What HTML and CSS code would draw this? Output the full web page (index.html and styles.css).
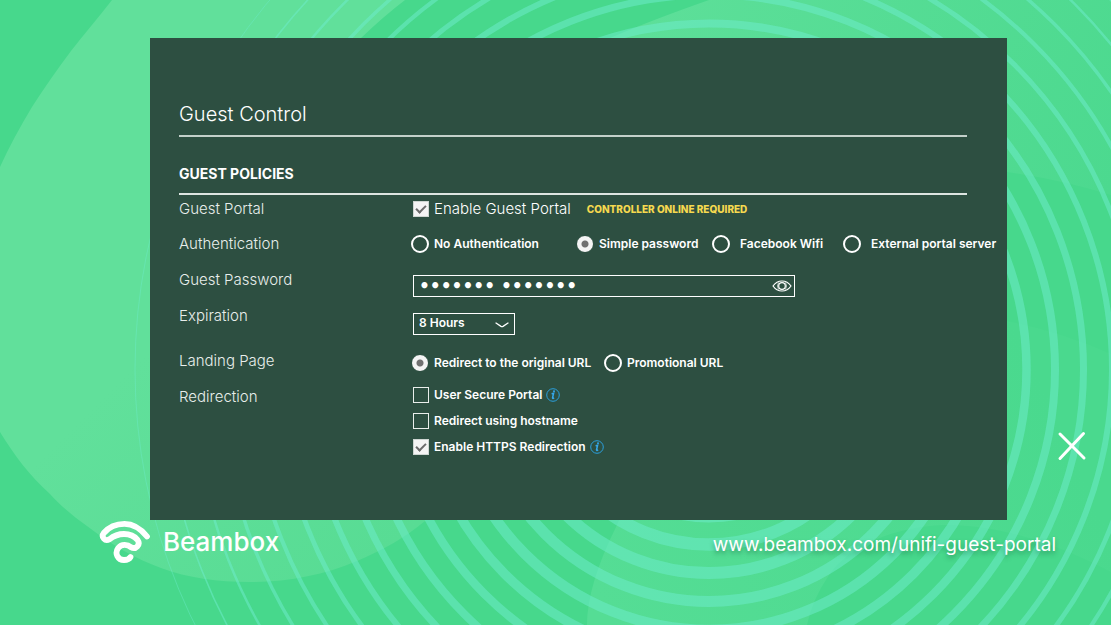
FILE: index.html
```html
<!DOCTYPE html>
<html lang="en">
<head>
<meta charset="utf-8">
<meta name="viewport" content="width=device-width, initial-scale=1">
<title>Guest Control</title>
<link rel="stylesheet" href="styles.css">
</head>
<body>
<div class="page">
  <svg class="backdrop" viewBox="0 0 1111 625" preserveAspectRatio="xMidYMid slice" aria-hidden="true">
    <defs>
      <linearGradient id="leaf" gradientUnits="userSpaceOnUse" x1="60" y1="150" x2="420" y2="520">
        <stop offset="0.4" stop-color="#61e09b"/><stop offset="1" stop-color="#58dc94"/>
      </linearGradient>
      <linearGradient id="crest" gradientUnits="userSpaceOnUse" x1="650" y1="0" x2="1111" y2="190">
        <stop offset="0" stop-color="#5ddf99"/><stop offset="1" stop-color="#4cd98f"/>
      </linearGradient>
      <linearGradient id="bowl" gradientUnits="userSpaceOnUse" x1="600" y1="600" x2="1050" y2="400">
        <stop offset="0" stop-color="#55dd95"/><stop offset="1" stop-color="#4ad98e"/>
      </linearGradient>
    </defs>
    <rect width="1111" height="625" fill="#47d88c"/>
    <path fill="url(#leaf)" d="M112 0C98 18 84 34 71 51C57 70 44 88 32 107C20 127 9 147 0 167V432C14 455 30 476 50 494C61 506 74 517 87 526C110 544 136 559 161 568C188 578 218 582 250 582C288 582 324 575 357 561C383 550 406 537 425 521L540 340L361 38Q384 16 405 0Z"/>
    <path fill="url(#crest)" d="M709 0Q652 20 610 38L700 160L1007 172Q1062 180 1111 195V0Z"/>
    <path fill="url(#bowl)" d="M640 480Q625 505 617 525Q587 585 587 625H807Q812 600 829 575C850 545 895 527 943 525C1000 524 1060 545 1111 572V354Q1062 332 1007 321Z"/>
    <g class="rings">
      <circle cx="709" cy="369.500" r="146.500" stroke-width="13"/>
      <circle cx="709" cy="369.500" r="175" stroke-width="12.500"/>
      <circle cx="709" cy="369.500" r="203.500" stroke-width="12"/>
      <circle cx="709" cy="369.500" r="232" stroke-width="11"/>
      <circle cx="709" cy="369.500" r="260.500" stroke-width="10.500"/>
      <circle cx="709" cy="369.500" r="289" stroke-width="9.500"/>
      <circle cx="709" cy="369.500" r="317.500" stroke-width="8.500"/>
      <circle cx="709" cy="369.500" r="346" stroke-width="8"/>
      <circle cx="709" cy="369.500" r="374.500" stroke-width="7"/>
      <circle cx="709" cy="369.500" r="403" stroke-width="6"/>
      <circle cx="709" cy="369.500" r="431.500" stroke-width="5"/>
      <circle cx="709" cy="369.500" r="460" stroke-width="4.200"/>
      <circle cx="709" cy="369.500" r="488.500" stroke-width="3.500"/>
      <circle cx="709" cy="369.500" r="517" stroke-width="2.500"/>
      <circle cx="709" cy="369.500" r="545.500" stroke-width="1.600"/>
      <circle cx="709" cy="369.500" r="574" stroke-width="0.800"/>
    </g>
  </svg>

  <main class="stage">
    <form class="panel">
      <h1 class="title">Guest Control</h1>
      <h2 class="section-title">Guest Policies</h2>

      <div class="rows">
        <div class="row">
          <span class="row-label">Guest Portal</span>
          <div class="line">
            <label class="choice choice-large"><input class="tick" type="checkbox" checked>Enable Guest Portal</label>
            <strong class="notice">CONTROLLER ONLINE REQUIRED</strong>
          </div>
        </div>

        <div class="row" role="radiogroup" aria-labelledby="auth-label">
          <span class="row-label" id="auth-label">Authentication</span>
          <div class="auth">
            <label class="choice"><input class="dot" type="radio" name="auth">No Authentication</label>
            <label class="choice"><input class="dot" type="radio" name="auth" checked>Simple password</label>
            <label class="choice choice-wide"><input class="dot" type="radio" name="auth">Facebook Wifi</label>
            <label class="choice choice-wide"><input class="dot" type="radio" name="auth">External portal server</label>
          </div>
        </div>

        <div class="row">
          <label class="row-label" for="password">Guest Password</label>
          <div class="field password">
            <input class="password-input" id="password" type="text" value="••••••• •••••••">
            <button class="reveal" type="button" aria-label="Show password">
              <svg width="20" height="12" viewBox="0 0 20 12" fill="none" stroke="#fff" stroke-width="1.200" aria-hidden="true">
                <path d="M1 6C3.500 2.400 6.500 1 10 1s6.500 1.400 9 5c-2.500 3.600-5.500 5-9 5S3.500 9.600 1 6Z"/>
                <circle cx="10" cy="6" r="3.300"/>
                <path d="M6.500 2.500Q4.500 6 6.500 9.500M13.500 2.500Q15.500 6 13.500 9.500" stroke-width="0.700"/>
              </svg>
            </button>
          </div>
        </div>

        <div class="row row-tall">
          <label class="row-label" for="expiration">Expiration</label>
          <div class="field expiration">
            <select class="expiration-select" id="expiration"><option>8 Hours</option></select>
            <svg class="chevron" width="14" height="6" viewBox="0 0 14 6" fill="none" stroke="#fff" stroke-width="1.300" stroke-linecap="round" aria-hidden="true"><path d="M1 1L6 4.400Q7 5 8 4.400L13 1"/></svg>
          </div>
        </div>

        <div class="row" role="radiogroup" aria-labelledby="landing-label">
          <span class="row-label" id="landing-label">Landing Page</span>
          <div class="landing">
            <label class="choice"><input class="dot" type="radio" name="landing" checked>Redirect to the original URL</label>
            <label class="choice"><input class="dot" type="radio" name="landing">Promotional URL</label>
          </div>
        </div>

        <div class="row">
          <span class="row-label">Redirection</span>
          <div class="stack">
            <div class="line">
              <label class="choice"><input class="tick" type="checkbox">User Secure Portal</label>
              <svg class="info" width="14" height="14" viewBox="0 0 14 14" aria-hidden="true"><circle cx="7" cy="7" r="6.300" fill="none" stroke="#2b9fdc"/><path d="M5.600 5.700L7.600 5.200L6.500 10Q6.600 10.900 8.100 9.900" fill="none" stroke="#35a8ea" stroke-width="1.500"/><circle cx="8" cy="3.300" r="1" fill="#35a8ea"/></svg>
            </div>
            <div class="line">
              <label class="choice"><input class="tick" type="checkbox">Redirect using hostname</label>
            </div>
            <div class="line">
              <label class="choice"><input class="tick" type="checkbox" checked>Enable HTTPS Redirection</label>
              <svg class="info" width="14" height="14" viewBox="0 0 14 14" aria-hidden="true"><circle cx="7" cy="7" r="6.300" fill="none" stroke="#2b9fdc"/><path d="M5.600 5.700L7.600 5.200L6.500 10Q6.600 10.900 8.100 9.900" fill="none" stroke="#35a8ea" stroke-width="1.500"/><circle cx="8" cy="3.300" r="1" fill="#35a8ea"/></svg>
            </div>
          </div>
        </div>
      </div>
    </form>

    <button class="close" type="button" aria-label="Close">
      <svg width="30" height="30" viewBox="0 0 30 30" stroke="#fff" stroke-width="3" stroke-linecap="round" aria-hidden="true"><path d="M3 3L27 27M26.500 2.500L3 27.500"/></svg>
    </button>
  </main>

  <footer class="footer">
    <div class="brand">
      <svg class="brand-mark" width="54" height="46" viewBox="98 518 54 46" fill="none" stroke="#fff" stroke-width="5.800" stroke-linecap="round" stroke-linejoin="round" aria-hidden="true">
        <path d="M147 535.500C140.500 527.500 132.500 522.900 124.500 522.900C116 522.900 108.500 526.500 103.800 532C100.800 536 105 541 109.500 538.200C113.500 535 118.500 533 124 533C129.500 533 134.500 535.200 137.500 538.800C141 543.800 135.500 549 131 546.200C127.500 543.200 121.500 542.800 118.200 547C114.200 552.500 118 559 124 559C127 559 129.500 557.800 130.500 556"/>
      </svg>
      <span class="brand-name">Beambox</span>
    </div>
    <a class="site" href="#">www.beambox.com/unifi-guest-portal</a>
  </footer>
</div>
</body>
</html>
```
FILE: styles.css
```css
* {
  box-sizing: border-box;
}

body {
  margin: 0;
  font-family: Inter, "Open Sans", sans-serif;
  color: #fff;
}

button {
  padding: 0;
  border: 0;
  background: none;
  cursor: pointer;
}

svg {
  display: block;
}

.page {
  position: relative;
  display: flex;
  flex-direction: column;
  min-height: 100vh;
  padding-top: 38px;
  overflow: hidden;
  background: #47d88c;
}

.backdrop {
  position: absolute;
  inset: 0;
  width: 100%;
  height: 100%;
}

.rings {
  fill: none;
  stroke: #6eeccb;
  stroke-opacity: 0.52;
}

.stage {
  position: relative;
  display: flex;
  align-items: flex-end;
  padding: 0 24px 0 150px;
}

.panel {
  flex: 1;
  padding: 64px 11px 63px 29px;
  background: #2d4f41;
}

.title {
  margin: 0 29px 27px 0;
  padding-bottom: 9px;
  border-bottom: 2px solid #c3d0ca;
  font-size: 20px;
  font-weight: 300;
  line-height: 24px;
}

.section-title {
  margin: 0 29px 4px 0;
  padding-bottom: 9px;
  border-bottom: 2px solid #dde5e1;
  font-size: 14px;
  font-weight: 700;
  line-height: 20px;
  text-transform: uppercase;
}

.row {
  display: grid;
  grid-template-columns: 234px 1fr;
  align-items: start;
  min-height: 36px;
}

.row:first-child {
  min-height: 35px;
}

.row-tall {
  min-height: 45px;
}

.row-label {
  font-size: 15px;
  font-weight: 300;
  line-height: 20px;
  color: #e8eeeb;
}

.line {
  display: flex;
  align-items: center;
}

.choice {
  display: flex;
  align-items: center;
  gap: 5px;
  font-size: 12px;
  font-weight: 600;
  line-height: 20px;
  white-space: nowrap;
}

.choice-large {
  font-size: 15px;
  font-weight: 300;
}

.choice-wide {
  gap: 10px;
}

.notice {
  margin-left: 16px;
  font-size: 10px;
  font-weight: 800;
  color: #f6d94f;
}

.tick,
.dot {
  appearance: none;
  flex: none;
  margin: 0;
  background: transparent;
}

.tick {
  width: 16px;
  height: 16px;
  border: 1px solid #e9eeeb;
}

.tick:checked {
  display: grid;
  place-items: center;
  border-color: #cfd6d2;
  background: #f4f4f4;
}

.tick:checked::before {
  content: "";
  width: 8px;
  height: 4px;
  margin-bottom: 3px;
  border: solid #6b6b6b;
  border-width: 0 0 2px 2px;
  transform: rotate(-45deg);
}

.dot {
  width: 18px;
  height: 18px;
  border: 2px solid #fff;
  border-radius: 50%;
}

.dot:checked {
  border: 1px solid #2d4f41;
  background: radial-gradient(circle, #707070 0 3px, #f4f4f4 4px);
}

.auth,
.landing {
  display: grid;
  grid-template-columns: 165px 136px 131px auto;
  margin-left: -2px;
}

.landing {
  grid-template-columns: 193px auto;
  margin-top: 2px;
}

.field {
  position: relative;
  display: flex;
  align-items: center;
  height: 22px;
  border: 1px solid #fff;
}

.password {
  max-width: 382px;
  margin-top: 5px;
}

.password-input {
  flex: 1;
  min-width: 0;
  padding: 0 5px;
  border: 0;
  background: none;
  font: 700 17px "DejaVu Sans", sans-serif;
  color: #fff;
}

.reveal {
  margin-right: 2px;
}

.expiration {
  width: 102px;
  margin-top: 7px;
}

.expiration-select {
  appearance: none;
  width: 100%;
  padding: 0 24px 3px 5px;
  border: 0;
  background: none;
  font: 600 12px Inter, sans-serif;
  color: #fff;
}

.chevron {
  position: absolute;
  right: 5px;
  bottom: 6px;
  pointer-events: none;
}

.stack {
  display: grid;
  gap: 6px;
  margin-top: -2px;
}

.info {
  margin-left: 4px;
}

.close {
  margin: 0 0 59px 50px;
}

.footer {
  position: relative;
  display: flex;
  align-items: flex-start;
  justify-content: space-between;
  padding: 0 55px 0 98px;
  margin-top: -2px;
}

.brand {
  display: flex;
  align-items: center;
  gap: 11px;
}

.brand-name {
  font-size: 26px;
  font-weight: 500;
  line-height: 48px;
}

.site {
  margin-top: 15px;
  font-size: 19px;
  font-weight: 400;
  line-height: 24px;
  color: #fff;
  text-decoration: none;
  text-shadow: 0 3px 4px rgba(20, 100, 60, 0.5);
}
```
